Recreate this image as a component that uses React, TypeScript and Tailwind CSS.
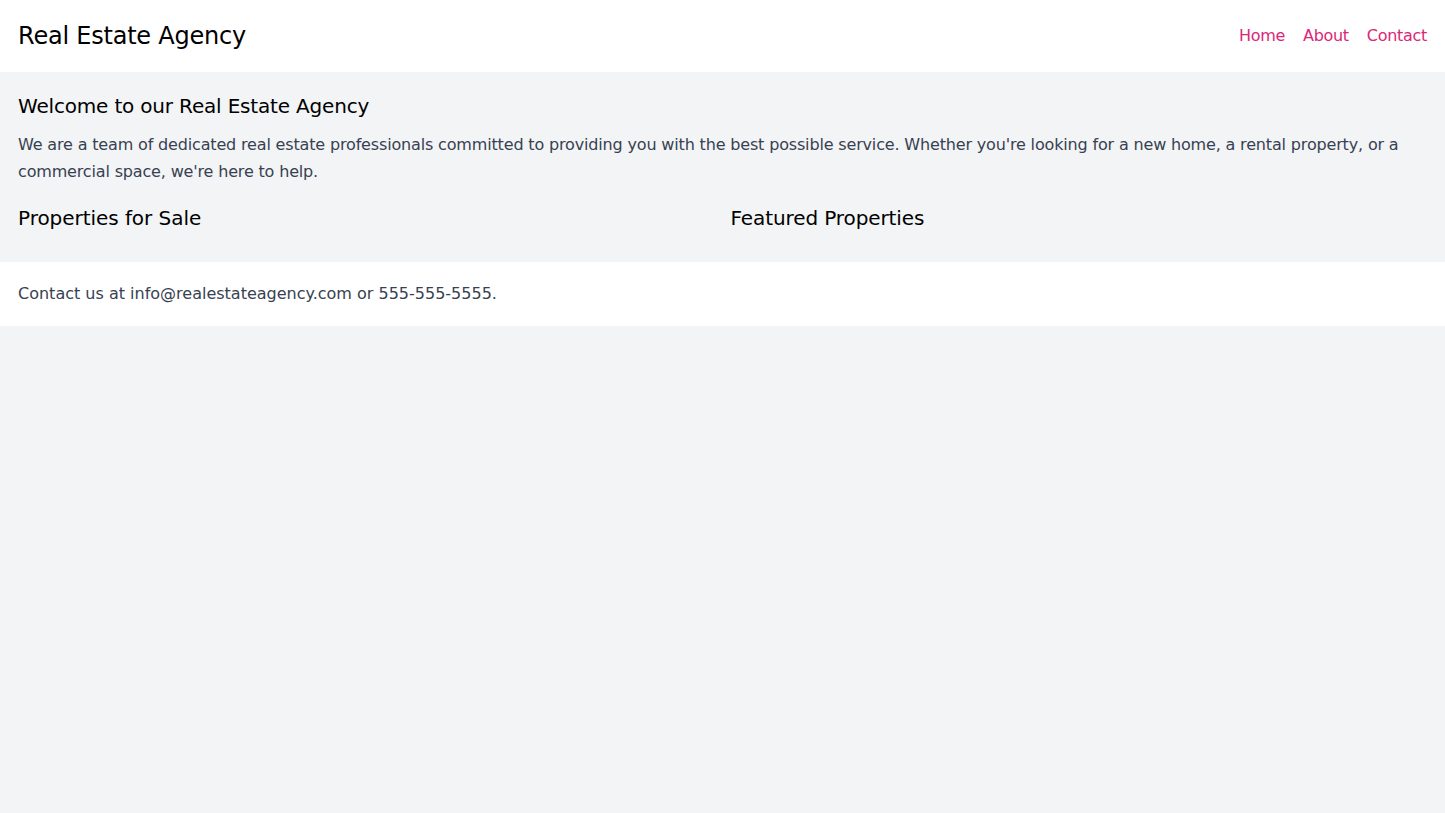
export default function App() {
  return (
    <div className="min-h-screen bg-[#f3f4f6] font-['DejaVu_Sans',sans-serif]">
      <header className="bg-white px-[18px] py-5 flex items-center justify-between">
        <h1 className="text-2xl text-black tracking-[-0.22px]">Real Estate Agency</h1>
        <nav className="flex items-center gap-[18px] text-[#db2777] tracking-[-0.3px]">
          <a href="#">Home</a>
          <a href="#">About</a>
          <a href="#">Contact</a>
        </nav>
      </header>

      <main className="px-[18px] pt-5 pb-[30px]">
        <h2 className="text-xl text-black mb-[11px] tracking-[-0.18px]">Welcome to our Real Estate Agency</h2>
        <p className="text-[#374151] leading-[27px] tracking-[-0.16px]">
          We are a team of dedicated real estate professionals committed to providing you with the best possible service. Whether you're looking for a new home, a rental property, or a commercial space, we're here to help.
        </p>
        <div className="grid grid-cols-2 gap-4 mt-[19px]">
          <section>
            <h2 className="text-xl text-black tracking-[-0.05px]">Properties for Sale</h2>
          </section>
          <section>
            <h2 className="text-xl text-black tracking-[-0.1px]">Featured Properties</h2>
          </section>
        </div>
      </main>

      <footer className="bg-white px-[18px] py-5 text-[#374151]">
        <p>Contact us at info@realestateagency.com or 555-555-5555.</p>
      </footer>
    </div>
  );
}
